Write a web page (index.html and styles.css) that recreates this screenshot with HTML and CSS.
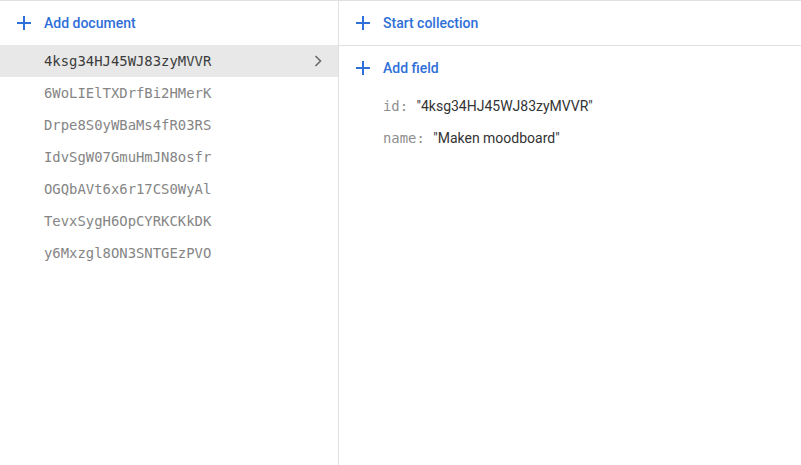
FILE: index.html
```html
<!DOCTYPE html>
<html>
<head>
<meta charset="utf-8">
<link rel="stylesheet" href="styles.css">
</head>
<body>
<div class="panel">
  <div class="col col-left">
    <div class="action head-left">
      <svg class="plus" width="14" height="14" viewBox="0 0 14 14"><path d="M7 0v14M0 7h14" stroke="#2f6fd8" stroke-width="2"/></svg>
      <span>Add document</span>
    </div>
    <ul class="docs">
      <li class="doc selected"><span>4ksg34HJ45WJ83zyMVVR</span>
        <svg class="chev" width="8" height="12" viewBox="0 0 8 12"><path d="M1.5 1l5 5-5 5" fill="none" stroke="#6b6b6b" stroke-width="1.6"/></svg>
      </li>
      <li class="doc">6WoLIElTXDrfBi2HMerK</li>
      <li class="doc">Drpe8S0yWBaMs4fR03RS</li>
      <li class="doc">IdvSgW07GmuHmJN8osfr</li>
      <li class="doc">OGQbAVt6x6r17CS0WyAl</li>
      <li class="doc">TevxSygH6OpCYRKCKkDK</li>
      <li class="doc">y6Mxzgl8ON3SNTGEzPVO</li>
    </ul>
  </div>
  <div class="col col-right">
    <div class="action head-right">
      <svg class="plus" width="14" height="14" viewBox="0 0 14 14"><path d="M7 0v14M0 7h14" stroke="#2f6fd8" stroke-width="2"/></svg>
      <span>Start collection</span>
    </div>
    <div class="action add-field">
      <svg class="plus" width="14" height="14" viewBox="0 0 14 14"><path d="M7 0v14M0 7h14" stroke="#2f6fd8" stroke-width="2"/></svg>
      <span>Add field</span>
    </div>
    <div class="field"><span class="key">id: </span><span class="val">"4ksg34HJ45WJ83zyMVVR"</span></div>
    <div class="field"><span class="key">name: </span><span class="val">"Maken moodboard"</span></div>
  </div>
</div>
</body>
</html>
```

FILE: styles.css
```css
html, body {
  margin: 0;
  padding: 0;
  background: #fff;
}
body {
  font-family: Roboto, "Noto Sans", sans-serif;
  font-size: 14px;
}
.panel {
  display: flex;
  height: 465px;
  border-top: 1px solid #e0e0e0;
  box-sizing: border-box;
}
.col-left {
  width: 338px;
  border-right: 1px solid #e0e0e0;
  flex: none;
}
.col-right {
  flex: 1;
}
.action {
  display: flex;
  align-items: center;
  color: #2f6fd8;
  font-weight: 500;
  font-size: 14px;
}
.plus {
  flex: none;
  margin-right: 13px;
}
.head-left {
  height: 44px;
  padding-left: 17px;
  box-sizing: border-box;
}
.head-right {
  height: 44px;
  padding-left: 17px;
  border-bottom: 1px solid #e0e0e0;
}
.add-field {
  height: 43px;
  padding-left: 17px;
  padding-bottom: 1px;
}
.docs {
  list-style: none;
  margin: 0;
  padding: 0;
}
.doc {
  display: flex;
  align-items: center;
  justify-content: space-between;
  height: 32px;
  padding-left: 44px;
  padding-right: 16px;
  font-family: "DejaVu Sans Mono", "Liberation Mono", monospace;
  font-size: 13.9px;
  color: #858585;
}
.doc.selected {
  background: #e8e8e8;
  color: #3c3c3c;
}
.field {
  display: flex;
  align-items: center;
  height: 32px;
  padding-left: 44px;
  white-space: pre;
}
.key {
  font-family: "DejaVu Sans Mono", "Liberation Mono", monospace;
  font-size: 13.9px;
  color: #8f8f8f;
}
.val {
  color: #333;
  font-size: 14px;
}
```
